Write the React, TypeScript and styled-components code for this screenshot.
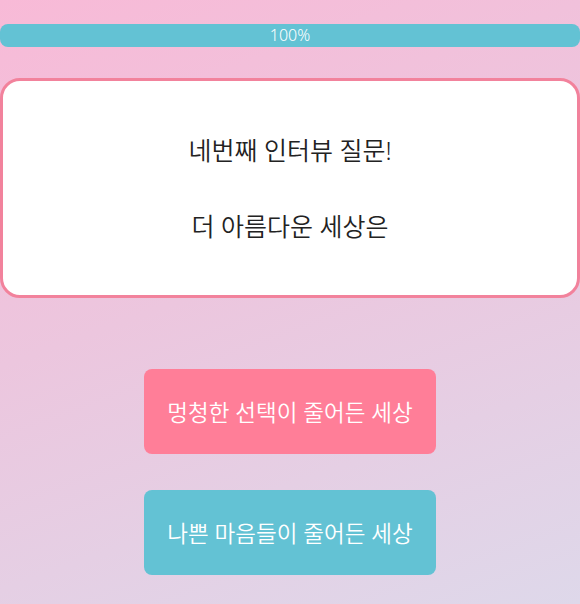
import React from 'react';
import styled, { createGlobalStyle } from 'styled-components';

const GlobalStyle = createGlobalStyle`
  html, body {
    margin: 0;
    padding: 0;
  }
  body {
    font-family: "Noto Sans", "Noto Sans CJK KR", sans-serif;
  }
`;

const Page = styled.div`
  width: 580px;
  height: 604px;
  overflow: hidden;
  box-sizing: border-box;
  padding-top: 24px;
  background: linear-gradient(160deg, #f8bad7 0%, #ecc6de 45%, #ded8ea 100%);
  display: flex;
  flex-direction: column;
  align-items: center;
  font-family: "Noto Sans", "Noto Sans CJK KR", sans-serif;
`;

const Progress = styled.div`
  width: 580px;
  height: 23px;
  border-radius: 8px;
  background: #63c2d4;
  color: #fff;
  font-size: 16px;
  font-weight: 300;
  line-height: 23px;
  text-align: center;
`;

const Card = styled.div`
  margin-top: 31px;
  width: 580px;
  height: 220px;
  box-sizing: border-box;
  border: 3px solid #f2829c;
  border-radius: 20px;
  background: #fff;
  display: flex;
  flex-direction: column;
  align-items: center;
  justify-content: center;
  gap: 40px;
`;

const Question = styled.div`
  font-size: 25px;
  font-weight: 350;
  line-height: 36px;
  color: #222;
`;

const Answers = styled.div`
  margin-top: 71px;
  display: flex;
  flex-direction: column;
  gap: 36px;
`;

const AnswerButton = styled.button<{ $color: string }>`
  width: 292px;
  height: 85px;
  border: none;
  border-radius: 8px;
  background: ${p => p.$color};
  color: #fff;
  font-family: inherit;
  font-size: 22.5px;
  font-weight: 350;
  padding: 0;
  cursor: pointer;
`;

export default function App() {
  return (
    <>
      <GlobalStyle />
      <Page>
        <Progress>100%</Progress>
        <Card>
          <Question>네번째 인터뷰 질문!</Question>
          <Question>더 아름다운 세상은</Question>
        </Card>
        <Answers>
          <AnswerButton $color="#ff7e98">멍청한 선택이 줄어든 세상</AnswerButton>
          <AnswerButton $color="#63c2d4">나쁜 마음들이 줄어든 세상</AnswerButton>
        </Answers>
      </Page>
    </>
  );
}
